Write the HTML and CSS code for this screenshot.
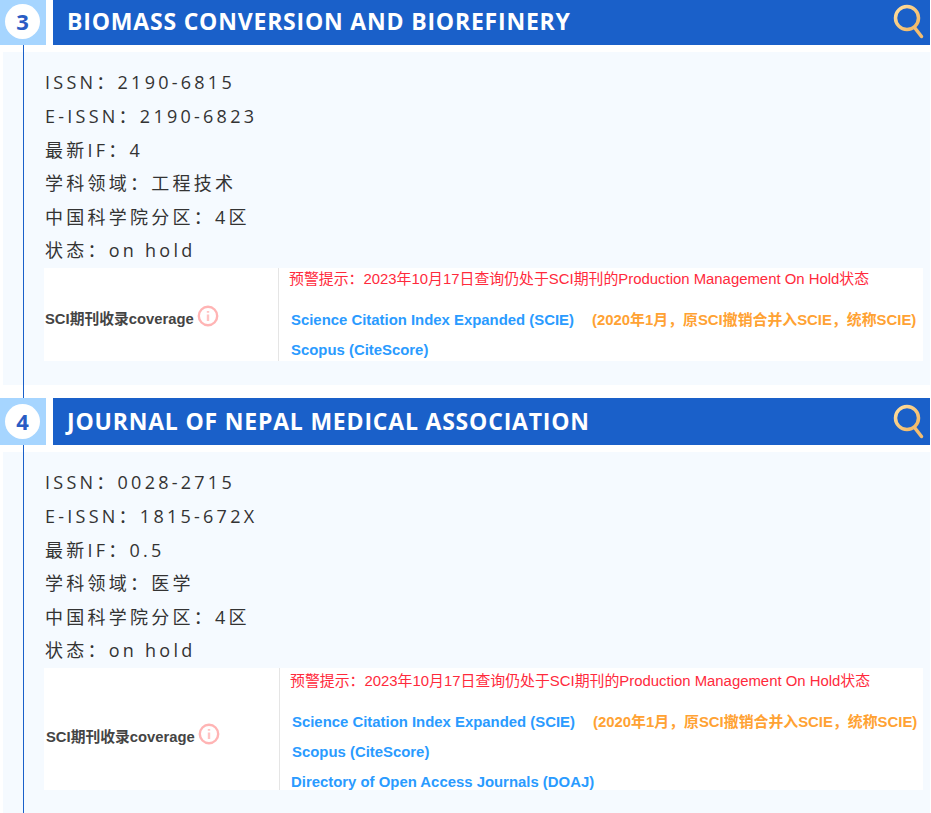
FILE: index.html
```html
<!DOCTYPE html>
<html lang="zh-CN">
<head>
  <meta charset="UTF-8">
  <title>SCI期刊 on hold</title>
  <link rel="stylesheet" href="styles.css">
</head>
<body>
  <svg class="defs" width="0" height="0" aria-hidden="true">
    <defs>
      <linearGradient id="lensGold" x1="0" y1="0" x2="1" y2="1">
        <stop offset="0" stop-color="#ffdf9f"/>
        <stop offset="1" stop-color="#f0b45f"/>
      </linearGradient>
    </defs>
  </svg>

  <section class="entry">
    <header class="entry-head">
      <div class="num-box"><span class="num">3</span></div>
      <div class="title-bar">
        <h2>BIOMASS CONVERSION AND BIOREFINERY</h2>
        <svg class="lens" width="32" height="40" viewBox="0 0 32 40">
          <circle cx="15" cy="18" r="11.5" fill="none" stroke="url(#lensGold)" stroke-width="3.5"/>
          <path d="M22.5 27.5L29.5 36.5" fill="none" stroke="#f4bd70" stroke-width="3.5" stroke-linecap="round"/>
        </svg>
      </div>
    </header>
    <div class="card">
      <p>ISSN：2190-6815</p>
      <p>E-ISSN：2190-6823</p>
      <p>最新IF：4</p>
      <p>学科领域：工程技术</p>
      <p>中国科学院分区：4区</p>
      <p>状态：on hold</p>
      <div class="cover">
        <div class="cover-label">
          <span>SCI期刊收录coverage</span>
          <svg class="info" width="22" height="22" viewBox="0 0 22 22">
            <circle cx="11" cy="11" r="9.2" fill="none" stroke="#ffb4b4" stroke-width="2.4"/>
            <path d="M11 9.5V16M11 6V7.8" fill="none" stroke="#ffc4c4" stroke-width="2.4"/>
          </svg>
        </div>
        <div class="cover-list">
          <div class="warn">预警提示：2023年10月17日查询仍处于SCI期刊的Production Management On Hold状态</div>
          <div class="idx"><span class="idx-name">Science Citation Index Expanded (SCIE)</span><span class="idx-note">(2020年1月，原SCI撤销合并入SCIE，统称SCIE)</span></div>
          <div class="idx"><span class="idx-name">Scopus (CiteScore)</span></div>
        </div>
      </div>
    </div>
  </section>

  <section class="entry">
    <header class="entry-head">
      <div class="num-box"><span class="num">4</span></div>
      <div class="title-bar">
        <h2>JOURNAL OF NEPAL MEDICAL ASSOCIATION</h2>
        <svg class="lens" width="32" height="40" viewBox="0 0 32 40">
          <circle cx="15" cy="18" r="11.5" fill="none" stroke="url(#lensGold)" stroke-width="3.5"/>
          <path d="M22.5 27.5L29.5 36.5" fill="none" stroke="#f4bd70" stroke-width="3.5" stroke-linecap="round"/>
        </svg>
      </div>
    </header>
    <div class="card">
      <p>ISSN：0028-2715</p>
      <p>E-ISSN：1815-672X</p>
      <p>最新IF：0.5</p>
      <p>学科领域：医学</p>
      <p>中国科学院分区：4区</p>
      <p>状态：on hold</p>
      <div class="cover cover-tall">
        <div class="cover-label">
          <span>SCI期刊收录coverage</span>
          <svg class="info" width="22" height="22" viewBox="0 0 22 22">
            <circle cx="11" cy="11" r="9.2" fill="none" stroke="#ffb4b4" stroke-width="2.4"/>
            <path d="M11 9.5V16M11 6V7.8" fill="none" stroke="#ffc4c4" stroke-width="2.4"/>
          </svg>
        </div>
        <div class="cover-list">
          <div class="warn">预警提示：2023年10月17日查询仍处于SCI期刊的Production Management On Hold状态</div>
          <div class="idx"><span class="idx-name">Science Citation Index Expanded (SCIE)</span><span class="idx-note">(2020年1月，原SCI撤销合并入SCIE，统称SCIE)</span></div>
          <div class="idx"><span class="idx-name">Scopus (CiteScore)</span></div>
          <div class="idx idx-last"><span class="idx-name">Directory of Open Access Journals (DOAJ)</span></div>
        </div>
      </div>
    </div>
  </section>
</body>
</html>
```

FILE: styles.css
```css
* {
  box-sizing: border-box;
  margin: 0;
  padding: 0;
}

html {
  height: 813px;
  overflow: hidden;
}

body {
  height: 815px;
  background: #fff;
  margin-top: -2px;
  font-family: "Open Sans", "Noto Sans CJK SC", sans-serif;
  color: #333;
}

.defs {
  display: block;
  height: 0;
}

.entry {
  position: relative;
  margin-bottom: 13px;
}

/* timeline */
.entry::before {
  content: "";
  position: absolute;
  left: 23px;
  top: 47px;
  bottom: -13px;
  width: 1px;
  background: #1a60c9;
  z-index: 2;
}

.entry-head {
  display: flex;
  height: 47px;
  width: 930px;
}

.num-box {
  width: 46px;
  padding-right: 1px;
  background: #a6d5ff;
  display: flex;
  align-items: center;
  justify-content: center;
}

.num {
  width: 35px;
  height: 35px;
  border-radius: 50%;
  background: #fff;
  color: #2a5cc4;
  font-size: 22px;
  font-weight: 700;
  line-height: 34px;
  text-align: center;
}

.title-bar {
  margin-left: 7px;
  flex: 1;
  background: #1a60c9;
  display: flex;
  align-items: center;
  justify-content: space-between;
  padding: 0 6px 0 14px;
}

.title-bar h2 {
  color: #fff;
  font-size: 23px;
  line-height: 45px;
  font-weight: 700;
  letter-spacing: 0.8px;
}

.lens {
  display: block;
  margin-top: -3px;
}

.card {
  width: 927px;
  margin: 7px 0 0 3px;
  padding: 14.4px 7px 24px 41px;
  background: #f5faff;
}

.card p {
  padding-left: 1px;
  font-size: 18px;
  line-height: 33.6px;
  letter-spacing: 3.25px;
  color: #333;
}

.cover {
  display: flex;
  height: 93px;
  background: #fff;
  overflow: hidden;
}

.cover-tall {
  height: 122px;
}

.cover-label {
  width: 234px;
  padding: 7px 0 0 1px;
  display: flex;
  align-items: center;
  gap: 3px;
  font-family: "Liberation Sans", "Noto Sans CJK SC", sans-serif;
  font-size: 14.8px;
  font-weight: 700;
  color: #444;
}

.cover-tall .cover-label {
  width: 235px;
  padding: 14px 0 0 2px;
}

.info {
  margin-top: -3px;
}

.cover-list {
  flex: 1;
  border-left: 1px solid #e5e5e5;
  padding-left: 11px;
  font-family: "Liberation Sans", "Noto Sans CJK SC", sans-serif;
  font-size: 14.9px;
}

.warn {
  height: 37px;
  margin-left: -1px;
  line-height: 22px;
  color: #ff2a3c;
}

.cover-tall .warn {
  height: 39px;
  padding-top: 2px;
}

.idx {
  height: 30px;
  line-height: 30px;
  padding-left: 1px;
  font-weight: 700;
  white-space: nowrap;
}

.idx-last {
  padding-left: 0;
}

.idx-name {
  color: #2a9bff;
}

.idx-note {
  margin-left: 18px;
  color: #ffa233;
}
```
